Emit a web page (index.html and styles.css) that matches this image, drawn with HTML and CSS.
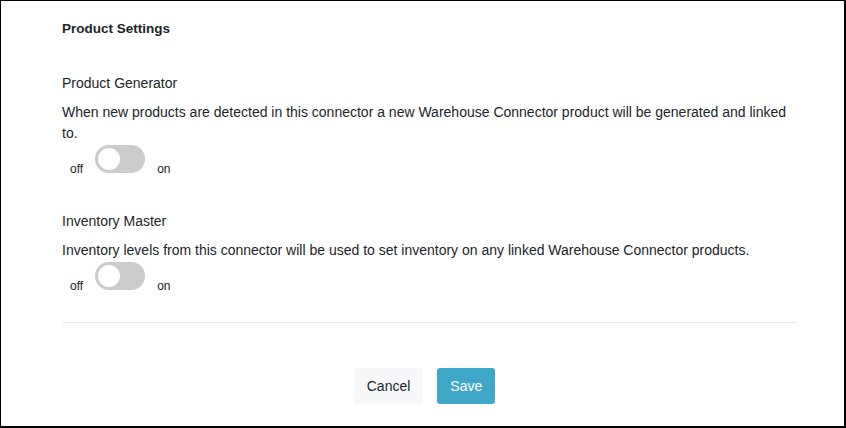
FILE: index.html
```html
<!DOCTYPE html>
<html lang="en">
<head>
<meta charset="utf-8">
<title>Product Settings</title>
<link rel="stylesheet" href="styles.css">
</head>
<body>
<div class="page">
  <h2 class="section-title">Product Settings</h2>

  <div class="setting setting-first">
    <div class="setting-label">Product Generator</div>
    <p class="setting-desc">When new products are detected in this connector a new Warehouse Connector product will be generated and linked to.</p>
    <div class="switch-row">
      <span class="switch-text switch-off">off</span><span class="switch"><span class="knob"></span></span><span class="switch-text switch-on">on</span>
    </div>
  </div>

  <div class="setting setting-next">
    <div class="setting-label">Inventory Master</div>
    <p class="setting-desc">Inventory levels from this connector will be used to set inventory on any linked Warehouse Connector products.</p>
    <div class="switch-row">
      <span class="switch-text switch-off">off</span><span class="switch"><span class="knob"></span></span><span class="switch-text switch-on">on</span>
    </div>
  </div>

  <hr class="divider">

  <div class="actions">
    <button class="btn btn-cancel" type="button">Cancel</button>
    <button class="btn btn-save" type="button">Save</button>
  </div>
</div>
</body>
</html>
```

FILE: styles.css
```css
* {
  box-sizing: border-box;
}

html, body {
  margin: 0;
  padding: 0;
  background: #fff;
}

body {
  font-family: "Liberation Sans", Arial, sans-serif;
  font-size: 14px;
  color: #212529;
}

.page {
  width: 846px;
  height: 428px;
  border-style: solid;
  border-color: #000;
  border-width: 1px 2px 2px 1px;
  padding: 0 47px 0 61px;
  overflow: hidden;
}

.section-title {
  margin: 18px 0 0;
  font-size: 13.5px;
  line-height: 20px;
  font-weight: bold;
}

.setting-first {
  margin-top: 34px;
}

.setting-next {
  margin-top: 35px;
}

.setting-label {
  line-height: 21px;
}

.setting-desc {
  margin: 8px 0 0;
  line-height: 21px;
}

.switch-row {
  margin-top: 1px;
  padding-left: 8px;
  font-size: 12px;
  line-height: 14px;
}

.switch-text {
  display: inline-block;
}

.switch-off {
  margin-right: 12px;
}

.switch-on {
  margin-left: 12px;
}

.switch {
  display: inline-block;
  position: relative;
  width: 50px;
  height: 28px;
  border-radius: 14px;
  background: #cccccc;
  vertical-align: baseline;
}

.knob {
  position: absolute;
  left: 3px;
  top: 3px;
  width: 22px;
  height: 22px;
  border-radius: 50%;
  background: #fff;
}

.divider {
  margin: 29px 0 0;
  border: 0;
  border-top: 1px solid #e5e5e5;
  height: 0;
}

.actions {
  margin-top: 45px;
  display: flex;
  justify-content: center;
  gap: 14px;
  padding-right: 10px;
}

.btn {
  height: 36px;
  padding: 0 13px;
  border: 0;
  border-radius: 3px;
  font-family: "Liberation Sans", Arial, sans-serif;
  font-size: 14px;
  line-height: 36px;
  cursor: pointer;
}

.btn-cancel {
  background: #f7f8fa;
  color: #212529;
}

.btn-save {
  background: #3fa8c9;
  color: #fff;
}
```
